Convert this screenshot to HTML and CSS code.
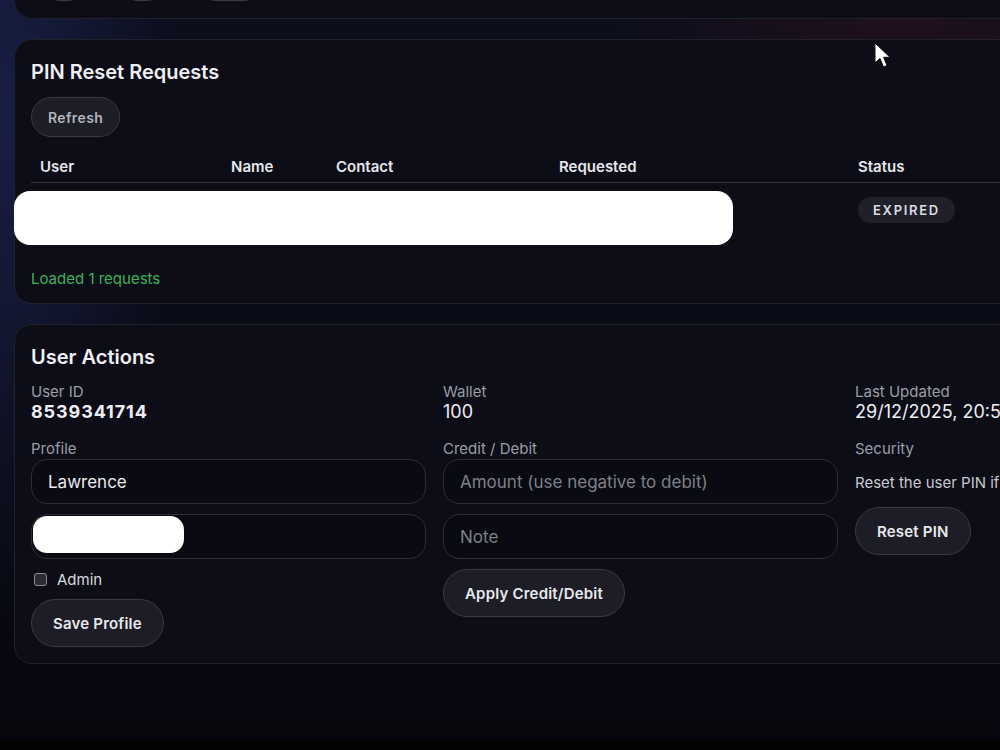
FILE: index.html
```html
<!DOCTYPE html>
<html lang="en">
<head>
  <meta charset="UTF-8">
  <meta name="viewport" content="width=device-width, initial-scale=1.0">
  <title>Admin - Users</title>
  <link rel="stylesheet" href="styles.css">
</head>
<body>

  <div class="screen">
    <div class="scrolled">

      <!-- previous card, mostly scrolled out of view -->
      <section class="card card-top">
        <div class="btn-row">
          <button class="btn btn-small" aria-label="Previous page"></button>
          <button class="btn btn-small" aria-label="Next page"></button>
          <button class="btn btn-small btn-wide" aria-label="Search"></button>
        </div>
      </section>

      <section class="card">
        <h2>PIN Reset Requests</h2>
        <button class="btn btn-refresh">Refresh</button>

        <table class="requests">
          <colgroup>
            <col style="width: 191px">
            <col style="width: 105px">
            <col style="width: 223px">
            <col style="width: 299px">
            <col>
          </colgroup>
          <thead>
            <tr>
              <th>User</th>
              <th>Name</th>
              <th>Contact</th>
              <th>Requested</th>
              <th>Status</th>
            </tr>
          </thead>
          <tbody>
            <tr>
              <td class="cell-user"><span class="redact redact-row"></span></td>
              <td></td>
              <td></td>
              <td></td>
              <td><span class="badge">EXPIRED</span></td>
            </tr>
          </tbody>
        </table>

        <div class="status-msg">Loaded 1 requests</div>
      </section>

      <section class="card card-actions">
        <h2>User Actions</h2>

        <div class="actions-grid">
          <div class="col">
            <div class="field">
              <div class="label">User ID</div>
              <div class="value value-strong">8539341714</div>
            </div>
            <div class="label">Profile</div>
            <input class="input" type="text" value="Lawrence">
            <div class="input-wrap">
              <input class="input" type="text" value="">
              <span class="redact redact-input"></span>
            </div>
            <label class="check">
              <input type="checkbox">
              <span>Admin</span>
            </label>
            <div><button class="btn">Save Profile</button></div>
          </div>

          <div class="col">
            <div class="field">
              <div class="label">Wallet</div>
              <div class="value">100</div>
            </div>
            <div class="label">Credit / Debit</div>
            <input class="input" type="text" placeholder="Amount (use negative to debit)">
            <input class="input" type="text" placeholder="Note">
            <div><button class="btn">Apply Credit/Debit</button></div>
          </div>

          <div class="col">
            <div class="field">
              <div class="label">Last Updated</div>
              <div class="value">29/12/2025, 20:51:08</div>
            </div>
            <div class="label">Security</div>
            <p class="hint">Reset the user PIN if they are locked out of their account.</p>
            <div><button class="btn">Reset PIN</button></div>
          </div>
        </div>
      </section>

    </div>
  </div>
  <div class="bottom-bar"></div>

  <!-- mouse pointer -->
  <svg class="pointer" width="18" height="28" viewBox="0 0 18 28">
    <path d="M1 1 L1 21 L6 16.5 L9.5 25 L13 23.5 L9.6 15.3 L16 15.3 Z" fill="#ffffff" stroke="#111" stroke-width="1"/>
  </svg>

</body>
</html>
```

FILE: styles.css
```css
/* Dark admin dashboard */
body {
  margin: 0;
  padding: 0;
  background-color: #000;
  font-family: Inter, "Noto Sans", sans-serif;
  color: #e8e8ec;
  overflow: hidden;
  height: 100vh;
}

.screen {
  height: 739px;
  overflow: hidden;
  background:
    radial-gradient(ellipse 180px 500px at 0 120px, rgba(40, 52, 120, 0.45), transparent),
    radial-gradient(ellipse 300px 120px at 900px 20px, rgba(70, 20, 30, 0.35), transparent),
    linear-gradient(180deg, #0c0e1c 0%, #0a0b15 50%, #06070d 100%);
}

.bottom-bar {
  height: 11px;
  background-color: #020203;
}

/* the page is scrolled down a little */
.scrolled {
  margin-top: -57px;
  display: flex;
  flex-direction: column;
  gap: 20px;
  padding-left: 14px;
}

.card {
  width: 1253px;
  box-sizing: border-box;
  background-color: #0c0d17;
  border: 1px solid #20212b;
  border-radius: 18px;
  padding: 18px 16px 14px;
}

.card-top {
  padding: 17px 16px;
}

.card-actions {
  padding-bottom: 16px;
}

.btn-row {
  display: flex;
  gap: 30px;
  padding-left: 9px;
}

h2 {
  margin: 0 0 11px;
  font-size: 20px;
  line-height: 28px;
  font-weight: 600;
  color: #f0f0f4;
}

.btn {
  height: 48px;
  padding: 0 21px;
  background-color: #1c1d26;
  border: 1px solid #383944;
  border-radius: 999px;
  color: #e8e8ec;
  font-family: inherit;
  font-size: 15px;
  font-weight: 600;
  letter-spacing: 0.2px;
  cursor: pointer;
}

.btn-small {
  height: 40px;
  width: 48px;
}

.btn-wide {
  width: 68px;
}

.btn-refresh {
  height: 40px;
  padding: 0 16px;
  font-size: 14px;
  color: #b3b4bc;
  letter-spacing: 0.4px;
}

/* requests table */
.requests {
  width: 100%;
  margin-top: 7px;
  border-collapse: collapse;
  table-layout: fixed;
}

.requests th {
  text-align: left;
  padding: 14px 9px 6px;
  font-size: 15px;
  line-height: 18px;
  font-weight: 600;
  color: #e6e6ea;
  border-bottom: 1px solid #33343d;
}

.requests td {
  padding: 14px 9px 30px;
  vertical-align: top;
}

.cell-user {
  position: relative;
}

.badge {
  display: inline-block;
  height: 26px;
  line-height: 26px;
  padding: 0 15px;
  border-radius: 13px;
  background-color: #1f2029;
  color: #dcdce2;
  font-size: 13px;
  font-weight: 600;
  letter-spacing: 1.7px;
}

/* redacted areas from the screenshot */
.redact {
  position: absolute;
  background-color: #fff;
  border-radius: 16px;
}

.redact-row {
  left: -17px;
  top: 8px;
  width: 719px;
  height: 54px;
}

.redact-input {
  left: 2px;
  top: 2px;
  width: 151px;
  height: 37px;
  border-radius: 14px;
}

.status-msg {
  margin-top: 16px;
  font-size: 15px;
  line-height: 20px;
  color: #3bb35c;
}

/* user actions */
.actions-grid {
  display: grid;
  grid-template-columns: 395px 395px 395px;
  column-gap: 17px;
  margin-top: 10px;
}

.col {
  display: flex;
  flex-direction: column;
  gap: 10px;
}

.field {
  margin-bottom: 7px;
}

.label {
  font-size: 15px;
  line-height: 20px;
  color: #9c9da6;
  margin-bottom: -10px;
}

.field .label {
  margin-bottom: 0;
}

.value {
  font-size: 18px;
  line-height: 20px;
  color: #eeeef2;
  white-space: nowrap;
}

.value-strong {
  font-weight: 700;
  letter-spacing: 0.9px;
}

.input {
  box-sizing: border-box;
  width: 395px;
  height: 45px;
  padding: 0 16px;
  background-color: #090a12;
  border: 1px solid #2c2d37;
  border-radius: 16px;
  color: #ebebef;
  font-family: inherit;
  font-size: 17px;
  outline: none;
}

.input::placeholder {
  color: #7f8089;
}

.input-wrap {
  position: relative;
  height: 45px;
}

.check {
  display: flex;
  align-items: center;
  gap: 10px;
  height: 20px;
  padding-left: 3px;
  font-size: 15px;
  color: #dadade;
}

.check input {
  appearance: none;
  margin: 0;
  width: 13px;
  height: 13px;
  border: 1.5px solid #8b8c94;
  border-radius: 3px;
  background-color: #2a2b33;
}

.hint {
  margin: 14px 0 4px;
  font-size: 15px;
  line-height: 20px;
  color: #c8c8ce;
  white-space: nowrap;
}

.pointer {
  position: fixed;
  left: 874px;
  top: 42px;
}
```
